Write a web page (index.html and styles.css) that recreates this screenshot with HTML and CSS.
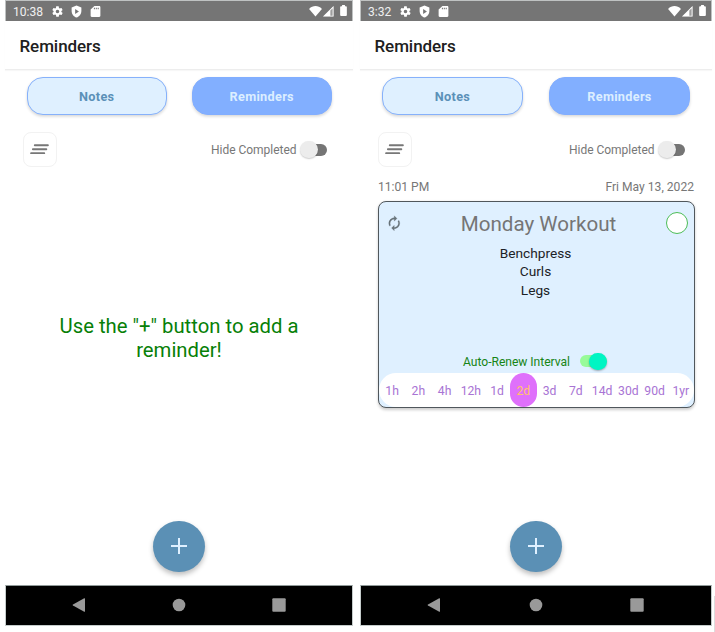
FILE: index.html
```html
<!DOCTYPE html>
<html lang="en">
<head>
<meta charset="utf-8">
<title>Reminders</title>
<link rel="stylesheet" href="styles.css">
</head>
<body>
<svg class="defs" width="0" height="0" aria-hidden="true">
  <symbol id="gear" viewBox="0 0 24 24"><path fill-rule="evenodd" d="M19.1 12.9l.1-.9-.1-.9 2-1.6c.2-.1.2-.4.1-.6l-1.9-3.3c-.1-.2-.4-.3-.6-.2l-2.4 1c-.5-.4-1-.7-1.600-.9l-.4-2.600c0-.2-.2-.4-.5-.4h-3.800c-.2 0-.4.2-.5.4L9.200 5.500c-.6.2-1.100.6-1.600.9l-2.400-1c-.2-.1-.5 0-.6.2L2.700 8.900c-.1.2-.1.500.1.600l2 1.600-.1.900.1.900-2 1.600c-.2.1-.2.400-.1.600l1.900 3.300c.1.200.4.300.6.200l2.400-1c.5.400 1 .7 1.600.9l.4 2.600c0 .2.2.4.500.4h3.800c.2 0 .4-.2.500-.4l.4-2.600c.6-.2 1.100-.6 1.600-.9l2.400 1c.2.100.5 0 .6-.2l1.900-3.300c.1-.2.100-.5-.1-.6zM12 15.300a3.300 3.300 0 1 1 0-6.600 3.300 3.300 0 0 1 0 6.600z"/></symbol>
  <symbol id="shield" viewBox="0 0 24 24"><path fill-rule="evenodd" d="M12 1L3 4.500V11c0 5.600 3.800 10.700 9 12 5.200-1.300 9-6.400 9-12V4.500zM9.500 7.500l7 4.500-7 4.500z"/></symbol>
  <symbol id="sdcard" viewBox="0 0 24 24"><path fill-rule="evenodd" d="M19 2h-9L3 8.500V20c0 1.100.9 2 2 2h14c1.100 0 2-.9 2-2V4c0-1.100-.9-2-2-2zM9 5h2v3H9zM12.500 5h2v3h-2zM16 5h2v3h-2z"/></symbol>
  <symbol id="wifi" viewBox="0 0 14 12"><path d="M0 3.200C4-.9 10-.9 14 3.200L7 11.500z"/></symbol>
  <symbol id="signal" viewBox="0 0 12 12"><path d="M11.500 0V11.500H0z" opacity=".3"/><path d="M8 3.500V11.500H0zM11.500 0v11.500H8v-1h2.500V2.400L8 5V3.500z"/></symbol>
  <symbol id="battery" viewBox="0 0 7 12"><path d="M2 0h3v1.200h1q1 0 1 1v8.300q0 1-1 1H1q-1 0-1-1V2.200q0-1 1-1h1z"/></symbol>
  <symbol id="sort" viewBox="0 0 18 10"><path d="M4.500 1.200H17M2.700 5H15.500M1 8.800H13.500" fill="none" stroke="#777" stroke-width="1.800" stroke-linecap="round"/></symbol>
  <symbol id="renew" viewBox="0 0 24 24"><path d="M12 6v3l4-4-4-4v3c-4.420 0-8 3.580-8 8 0 1.570.46 3.030 1.240 4.260L6.700 14.800A5.870 5.870 0 0 1 6 12c0-3.310 2.690-6 6-6zm6.760 1.740L17.300 9.200c.44.84.7 1.790.7 2.800 0 3.310-2.690 6-6 6v-3l-4 4 4 4v-3c4.420 0 8-3.580 8-8 0-1.570-.46-3.030-1.240-4.260z"/></symbol>
</svg>

<main class="screens">
  <section class="phone phone-empty">
    <div class="status">
      <span class="clock">10:38</span>
      <svg class="st-icon"><use href="#gear"/></svg>
      <svg class="st-icon"><use href="#shield"/></svg>
      <svg class="st-icon"><use href="#sdcard"/></svg>
      <svg class="st-wifi"><use href="#wifi"/></svg>
      <svg class="st-signal"><use href="#signal"/></svg>
      <svg class="st-battery"><use href="#battery"/></svg>
    </div>
    <header class="appbar"><h1>Reminders</h1></header>
    <nav class="tabs">
      <button class="tab">Notes</button>
      <button class="tab tab-active">Reminders</button>
    </nav>
    <div class="tools">
      <button class="sort"><svg><use href="#sort"/></svg></button>
      <span class="hide-label">Hide Completed</span>
      <span class="switch"></span>
    </div>
    <div class="content">
      <p class="empty">Use the "+" button to add a reminder!</p>
    </div>
    <div class="fab-row"><button class="fab"></button></div>
    <div class="navbar">
      <svg viewBox="0 0 14 14"><path d="M13 .8v12.400q0 .9-.8.5L1 7.500q-.8-.5 0-1L12.200.300Q13-.1 13 .8z"/></svg>
      <svg viewBox="0 0 14 14"><circle cx="7" cy="7" r="6.300"/></svg>
      <svg viewBox="0 0 14 14"><rect x=".3" y=".3" width="13.400" height="13.400" rx="1"/></svg>
    </div>
  </section>

  <section class="phone phone-list">
    <div class="status">
      <span class="clock">3:32</span>
      <svg class="st-icon"><use href="#gear"/></svg>
      <svg class="st-icon"><use href="#shield"/></svg>
      <svg class="st-icon"><use href="#sdcard"/></svg>
      <svg class="st-wifi"><use href="#wifi"/></svg>
      <svg class="st-signal"><use href="#signal"/></svg>
      <svg class="st-battery"><use href="#battery"/></svg>
    </div>
    <header class="appbar"><h1>Reminders</h1></header>
    <nav class="tabs">
      <button class="tab">Notes</button>
      <button class="tab tab-active">Reminders</button>
    </nav>
    <div class="tools">
      <button class="sort"><svg><use href="#sort"/></svg></button>
      <span class="hide-label">Hide Completed</span>
      <span class="switch"></span>
    </div>
    <div class="content">
      <div class="when"><span>11:01 PM</span><span>Fri May 13, 2022</span></div>
      <article class="card">
        <div class="card-head">
          <svg class="renew"><use href="#renew"/></svg>
          <h2>Monday Workout</h2>
          <span class="check"></span>
        </div>
        <div class="items">Benchpress<br>Curls<br>Legs</div>
        <div class="auto"><span>Auto-Renew Interval</span><span class="switch switch-on"></span></div>
        <div class="intervals">
          <span>1h</span><span>2h</span><span>4h</span><span>12h</span><span>1d</span><span class="picked">2d</span><span>3d</span><span>7d</span><span>14d</span><span>30d</span><span>90d</span><span>1yr</span>
        </div>
      </article>
    </div>
    <div class="fab-row"><button class="fab"></button></div>
    <div class="navbar">
      <svg viewBox="0 0 14 14"><path d="M13 .8v12.400q0 .9-.8.5L1 7.500q-.8-.5 0-1L12.200.300Q13-.1 13 .8z"/></svg>
      <svg viewBox="0 0 14 14"><circle cx="7" cy="7" r="6.300"/></svg>
      <svg viewBox="0 0 14 14"><rect x=".3" y=".3" width="13.400" height="13.400" rx="1"/></svg>
    </div>
  </section>
  <div class="edge"></div>
</main>
</body>
</html>
```
FILE: styles.css
```css
* { box-sizing: border-box; }
body {
  margin: 0;
  width: 715px;
  height: 632px;
  overflow: hidden;
  background: #fff;
  font-family: Roboto, "Liberation Sans", sans-serif;
}
h1, h2, p { margin: 0; font-weight: 400; }
button { border: 0; padding: 0; font-family: inherit; }
svg { display: block; flex: none; }
.defs { position: absolute; }

.screens { display: flex; height: 632px; padding-left: 5px; }
.phone { display: flex; flex-direction: column; height: 626.3px; flex: none; }
.phone-empty { width: 348px; margin-right: 7px; --gutter: 18px; }
.phone-list { width: 352px; --gutter: 18px; }
.edge { width: 1px; height: 36px; margin: 596px 0 0 2px; background: #ddd; }

.status {
  display: flex;
  align-items: center;
  height: 21.4px;
  padding: 0 5.5px 0 7px;
  border: 1px solid #bfc2c2;
  border-bottom: 0;
  background: #757575;
  color: #f0f0f0;
  fill: #fff;
}
.clock { font-size: 12.1px; line-height: 20px; margin: 2px 2px 0 0; }
.st-icon { width: 13px; height: 13px; margin-left: 5.8px; }
.st-wifi { width: 13px; height: 11px; margin-left: auto; }
.st-signal { width: 11px; height: 11px; margin-left: 1px; }
.st-battery { width: 7px; height: 11.5px; margin-left: 5.5px; }

.appbar {
  height: 49.1px;
  padding: 14px 0 0 14.5px;
  border-bottom: 1.5px solid #ededed;
  box-shadow: 0 1px 1px #f7f7f7;
}
.appbar h1 { font-size: 17px; line-height: 22px; font-weight: 500; letter-spacing: -.08px; color: #202020; }

.tabs {
  display: flex;
  justify-content: space-between;
  padding: 7px 21.5px 0 22px;
}
.phone-list .tabs { padding-right: 22px; }
.tab {
  width: 139.5px;
  height: 37.8px;
  border: 1.3px solid #86b1fb;
  border-radius: 16px;
  background: #dff0ff;
  box-shadow: 0 1.5px 3px rgba(0, 0, 0, .16);
  color: #5b90b8;
  font-size: 12.7px;
  font-weight: 700;
  letter-spacing: .3px;
  line-height: 36px;
  padding-top: 1px;
}
.phone-list .tab { width: 141px; }
.tab-active { border-color: #82aeff; background: #82afff; color: #dceeff; }

.tools {
  display: flex;
  align-items: center;
  height: 34.5px;
  margin: 17.2px 26px 0 var(--gutter);
}
.phone-list .tools { margin-right: 27px; }
.sort {
  display: grid;
  place-items: center;
  width: 33.8px;
  height: 34.5px;
  border: 1px solid #f2f2f2;
  border-radius: 8px;
  background: #fff;
}
.sort svg { width: 19px; height: 10.5px; margin: 0 1px 1px 0; }
.hide-label { margin: 1px 3.5px 0 auto; font-size: 12px; letter-spacing: -.03px; color: #777; }
.switch {
  display: flex;
  align-items: center;
  width: 24px;
  height: 12px;
  border-radius: 6px;
  background: #757575;
}
.tools .switch { margin-left: 3px; }
.switch::before {
  content: "";
  width: 17.5px;
  height: 17.5px;
  margin-left: -3px;
  flex: none;
  border-radius: 50%;
  background: #ececec;
  box-shadow: 0 1px 1.5px rgba(0, 0, 0, .2);
}
.switch-on { width: 27px; justify-content: flex-end; background: #98fb98; }
.switch-on::before { background: #00f5c3; box-shadow: 0 1px 2px rgba(0, 0, 0, .3); }

.content { flex: 1; }
.empty {
  width: 270px;
  margin: 147px auto 0;
  text-align: center;
  font-size: 20.3px;
  line-height: 24px;
  color: #078007;
}
.when {
  display: flex;
  justify-content: space-between;
  margin: 13px var(--gutter) 6px;
  font-size: 12.1px;
  line-height: 15px;
  color: #777;
}
.card {
  display: flex;
  flex-direction: column;
  height: 207px;
  margin: 0 17px 0 var(--gutter);
  overflow: hidden;
  border: 1.3px solid #50575c;
  border-radius: 8px;
  background: #dff0ff;
  box-shadow: 0 1.5px 3px rgba(0, 0, 0, .2);
}
.card-head { display: flex; align-items: center; padding: 9px 6.5px 0 7px; }
.renew { width: 16.5px; height: 16.5px; fill: #68737a; stroke: #68737a; stroke-width: .3; }
.card-head h2 { flex: 1; padding-top: 1px; margin: 0 0 -1px 9px; text-align: center; font-size: 20.6px; line-height: 25px; color: #757575; }
.check { width: 22px; height: 22px; border: 1px solid #4dbd58; border-radius: 50%; background: #fff; }
.items { flex: 1; margin: 8px 2px 0 0; text-align: center; font-size: 13.7px; line-height: 18.5px; color: #1c2226; }
.auto { display: flex; align-items: center; justify-content: center; height: 23px; padding-right: 3px; font-size: 12.1px; letter-spacing: -.03px; color: #168516; }
.auto span:first-child { padding-top: 1px; }
.auto .switch { margin: 0 0 0 10px; }
.intervals { display: flex; height: 34px; border-radius: 17px; background: #fff; flex: none; }
.intervals span {
  flex: 1 1 0;
  border-radius: 14px;
  text-align: center;
  font-size: 12.2px;
  line-height: 36px;
  color: #a874d4;
}
.intervals .picked { background: #df70fb; color: #ffc46b; }

.fab-row { display: flex; justify-content: center; height: 64px; }
.fab {
  display: grid;
  place-items: center;
  width: 51.3px;
  height: 51.3px;
  border-radius: 50%;
  background: #5b90b5;
  box-shadow: 0 3px 5px rgba(0, 0, 0, .25);
}
.fab::before, .fab::after {
  content: "";
  grid-area: 1 / 1;
  width: 16px;
  height: 1.5px;
  background: #dff0ff;
}
.fab::after { width: 1.5px; height: 16px; }

.navbar {
  display: flex;
  align-items: center;
  justify-content: space-between;
  height: 41.8px;
  padding: 0 66px 0 65.5px;
  border: 1px solid #c5cccb;
  border-top-color: #909a99;
  background: #000;
  fill: #999;
}
.phone-list .navbar { padding: 0 67px 0 66px; }
.navbar svg { width: 14px; height: 14px; }
```
